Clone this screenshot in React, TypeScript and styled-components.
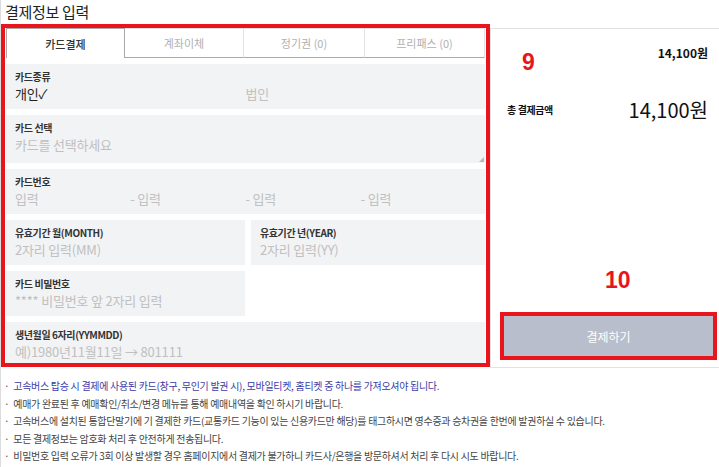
import React from "react";
import styled, { createGlobalStyle, css } from "styled-components";

const GlobalStyle = createGlobalStyle`
  html, body {
    margin: 0;
    padding: 0;
    background: #fff;
  }
  body {
    font-family: "Noto Sans CJK KR", "Noto Sans", "Liberation Sans", sans-serif;
    color: #222;
  }
`;

const Page = styled.div`
  width: 719px;
  height: 467px;
  box-sizing: border-box;
  border-left: 1px solid #dcdcdc;
  overflow: hidden;
`;

const Title = styled.h2`
  margin: 0;
  height: 24px;
  padding-left: 4px;
  font-size: 15px;
  font-weight: 400;
  line-height: 24px;
  color: #222;
  letter-spacing: -0.3px;
`;

const Row = styled.div`
  display: flex;
  align-items: flex-start;
`;

const FormBox = styled.section`
  width: 489px;
  box-sizing: border-box;
  border: 4px solid #e8161c;
  padding: 0 1px;
  display: flex;
  flex-direction: column;
  gap: 6px;
`;

const Tabs = styled.div`
  display: grid;
  grid-template-columns: 119px 119px 121px 1fr;
  height: 30px;
`;

const Tab = styled.div<{ $active?: boolean }>`
  display: flex;
  align-items: center;
  justify-content: center;
  font-size: 11px;
  box-sizing: border-box;
  border-top: 1px solid #e2e2e2;
  border-right: 1px solid #e2e2e2;
  border-bottom: 1px solid #a9a9a9;
  color: #b0b0b0;
  ${(p) =>
    p.$active &&
    css`
      border-left: 1px solid #a9a9a9;
      border-right: 1px solid #a9a9a9;
      border-top: 1px solid #a9a9a9;
      border-bottom: none;
      color: #333;
      font-weight: 500;
    `}
`;

const Field = styled.div<{ $h: number; $grip?: boolean }>`
  position: relative;
  height: ${(p) => p.$h}px;
  box-sizing: border-box;
  background: #f2f3f5;
  padding: 6px 9px 0;
  ${(p) =>
    p.$grip &&
    css`
      &::after {
        content: "";
        position: absolute;
        right: 1px;
        bottom: 1px;
        width: 0;
        height: 0;
        border-left: 5px solid transparent;
        border-bottom: 5px solid #b9b9b9;
      }
    `}
`;

const Label = styled.div`
  font-size: 10px;
  font-weight: 700;
  line-height: 14px;
  color: #333;
  letter-spacing: -0.4px;
`;

const Value = styled.div<{ $dark?: boolean }>`
  font-size: 13px;
  line-height: 20px;
  color: ${(p) => (p.$dark ? "#222" : "#c0c0c0")};
  letter-spacing: -0.2px;
  white-space: nowrap;
`;

const Split = styled.div<{ $cols: number }>`
  display: grid;
  grid-template-columns: repeat(${(p) => p.$cols}, 1fr);
`;

const Halves = styled.div`
  display: grid;
  grid-template-columns: 239px 1fr;
  gap: 6px;
`;

const Summary = styled.aside`
  position: relative;
  flex: 1;
  margin-top: 4px;
  height: 340px;
  box-sizing: border-box;
  border: 1px solid #e2e2e2;
  border-right: none;
  display: flex;
  flex-direction: column;
  padding: 0 0 7px 9px;
`;

const Amount = styled.div`
  margin-top: 14px;
  padding-right: 11px;
  text-align: right;
  font-size: 12px;
  font-weight: 700;
  line-height: 20px;
  color: #111;
`;

const TotalRow = styled.div`
  margin-top: 32px;
  padding: 0 11px 0 7px;
  display: flex;
  justify-content: space-between;
  align-items: center;
`;

const TotalLabel = styled.span`
  font-size: 10px;
  font-weight: 700;
  color: #111;
  letter-spacing: -0.4px;
`;

const TotalValue = styled.span`
  font-size: 20px;
  color: #111;
`;

const Marker = styled.span<{ $x: number; $y: number }>`
  position: absolute;
  left: ${(p) => p.$x}px;
  top: ${(p) => p.$y}px;
  font-family: "Liberation Sans", Arial, sans-serif;
  font-size: 23px;
  font-weight: 700;
  color: #e8161c;
  line-height: 1;
`;

const PayFrame = styled.div`
  margin-top: auto;
  margin-right: 2px;
  border: 4px solid #e8161c;
`;

const PayButton = styled.button`
  display: block;
  width: 100%;
  height: 40px;
  border: none;
  background: #b8becb;
  color: #fff;
  font-family: inherit;
  font-size: 12px;
  cursor: pointer;
`;

const Notices = styled.ul`
  list-style: none;
  margin: 9px 0 0;
  padding: 0 0 0 3px;
`;

const Notice = styled.li<{ $blue?: boolean }>`
  font-size: 10px;
  line-height: 17.5px;
  letter-spacing: -0.3px;
  color: ${(p) => (p.$blue ? "#3b3ba8" : "#444")};
  white-space: nowrap;
  &::before {
    content: "·";
    margin-right: 4px;
    color: #555;
  }
`;

const tabs = ["카드결제", "계좌이체", "정기권 (0)", "프리패스 (0)"];

const notices = [
  "고속버스 탑승 시 결제에 사용된 카드(창구, 무인기 발권 시), 모바일티켓, 홈티켓 중 하나를 가져오셔야 됩니다.",
  "예매가 완료된 후 예매확인/취소/변경 메뉴를 통해 예매내역을 확인 하시기 바랍니다.",
  "고속버스에 설치된 통합단말기에 기 결제한 카드(교통카드 기능이 있는 신용카드만 해당)를 태그하시면 영수증과 승차권을 한번에 발권하실 수 있습니다.",
  "모든 결제정보는 암호화 처리 후 안전하게 전송됩니다.",
  "비밀번호 입력 오류가 3회 이상 발생할 경우 홈페이지에서 결제가 불가하니 카드사/은행을 방문하셔서 처리 후 다시 시도 바랍니다.",
];

export default function App() {
  return (
    <Page>
      <GlobalStyle />
      <Title>결제정보 입력</Title>
      <Row>
        <FormBox>
          <Tabs>
            {tabs.map((t, i) => (
              <Tab key={t} $active={i === 0}>
                {t}
              </Tab>
            ))}
          </Tabs>
          <Field $h={45}>
            <Label>카드종류</Label>
            <Split $cols={2}>
              <Value $dark>개인✓</Value>
              <Value>법인</Value>
            </Split>
          </Field>
          <Field $h={48} $grip>
            <Label>카드 선택</Label>
            <Value>카드를 선택하세요</Value>
          </Field>
          <Field $h={45}>
            <Label>카드번호</Label>
            <Split $cols={4}>
              <Value>입력</Value>
              <Value>- 입력</Value>
              <Value>- 입력</Value>
              <Value>- 입력</Value>
            </Split>
          </Field>
          <Halves>
            <Field $h={45}>
              <Label>유효기간 월(MONTH)</Label>
              <Value>2자리 입력(MM)</Value>
            </Field>
            <Field $h={45}>
              <Label>유효기간 년(YEAR)</Label>
              <Value>2자리 입력(YY)</Value>
            </Field>
          </Halves>
          <Halves>
            <Field $h={45}>
              <Label>카드 비밀번호</Label>
              <Value>**** 비밀번호 앞 2자리 입력</Value>
            </Field>
          </Halves>
          <Field $h={41}>
            <Label>생년월일 6자리(YYMMDD)</Label>
            <Value>예)1980년11월11일 → 801111</Value>
          </Field>
        </FormBox>
        <Summary>
          <Marker $x={31} $y={22}>9</Marker>
          <Amount>14,100원</Amount>
          <TotalRow>
            <TotalLabel>총 결제금액</TotalLabel>
            <TotalValue>14,100원</TotalValue>
          </TotalRow>
          <Marker $x={114} $y={240}>10</Marker>
          <PayFrame>
            <PayButton>결제하기</PayButton>
          </PayFrame>
        </Summary>
      </Row>
      <Notices>
        {notices.map((n, i) => (
          <Notice key={i} $blue={i === 0}>
            {n}
          </Notice>
        ))}
      </Notices>
    </Page>
  );
}
